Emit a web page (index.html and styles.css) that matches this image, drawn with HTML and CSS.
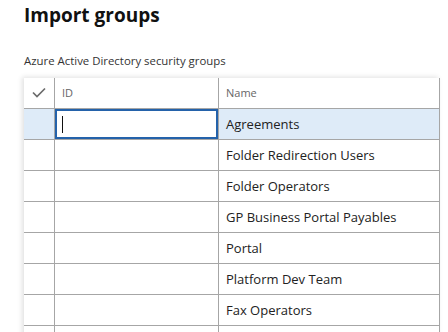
FILE: index.html
```html
<!DOCTYPE html>
<html lang="en">
<head>
    <meta charset="UTF-8">
    <meta name="viewport" content="width=device-width, initial-scale=1.0">
    <title>Import groups</title>
    <link rel="stylesheet" href="styles.css">
</head>
<body>
    <h1 class="page-title">Import groups</h1>
    <div class="section-label">Azure Active Directory security groups</div>

    <div class="grid">
        <div class="grid-row grid-head">
            <div class="cell cell-check">
                <svg width="30" height="30" viewBox="0 0 30 30">
                    <polyline points="9,14.5 13,18.5 21,10.5" fill="none" stroke="#6b6b6b" stroke-width="1.7"/>
                </svg>
            </div>
            <div class="cell cell-id">ID</div>
            <div class="cell cell-name">Name</div>
        </div>

        <div class="grid-row selected">
            <div class="cell cell-check"></div>
            <div class="cell cell-id">
                <div class="edit-box"><span class="caret"></span></div>
            </div>
            <div class="cell cell-name">Agreements</div>
        </div>
        <div class="grid-row">
            <div class="cell cell-check"></div>
            <div class="cell cell-id"></div>
            <div class="cell cell-name">Folder Redirection Users</div>
        </div>
        <div class="grid-row">
            <div class="cell cell-check"></div>
            <div class="cell cell-id"></div>
            <div class="cell cell-name">Folder Operators</div>
        </div>
        <div class="grid-row">
            <div class="cell cell-check"></div>
            <div class="cell cell-id"></div>
            <div class="cell cell-name">GP Business Portal Payables</div>
        </div>
        <div class="grid-row">
            <div class="cell cell-check"></div>
            <div class="cell cell-id"></div>
            <div class="cell cell-name">Portal</div>
        </div>
        <div class="grid-row">
            <div class="cell cell-check"></div>
            <div class="cell cell-id"></div>
            <div class="cell cell-name">Platform Dev Team</div>
        </div>
        <div class="grid-row">
            <div class="cell cell-check"></div>
            <div class="cell cell-id"></div>
            <div class="cell cell-name">Fax Operators</div>
        </div>
        <div class="grid-row">
            <div class="cell cell-check"></div>
            <div class="cell cell-id"></div>
            <div class="cell cell-name"></div>
        </div>
    </div>
</body>
</html>
```

FILE: styles.css
```css
html {
    overflow: hidden;
}
body {
    margin: 0;
    padding: 3px 0 0 24px;
    font-family: "Segoe UI", "Open Sans", sans-serif;
    color: #222;
    background: #fff;
}
.page-title {
    margin: 0;
    font-size: 19px;
    line-height: 24px;
    font-weight: 700;
    color: #111;
}
.section-label {
    margin-top: 26px;
    font-size: 11.4px;
    line-height: 15px;
    color: #333;
}
.grid {
    margin-top: 10px;
    width: 416px;
    box-shadow: -2px -1px 5px rgba(0, 0, 0, 0.12);
}
.grid-row {
    display: grid;
    grid-template-columns: 31px 164px 221px;
    height: 31px;
}
.cell {
    box-sizing: border-box;
    border-right: 1px solid #a6a6a6;
    border-bottom: 1px solid #a6a6a6;
    padding-left: 7px;
    font-size: 13px;
    line-height: 30px;
    white-space: nowrap;
    overflow: hidden;
}
.cell-check {
    padding: 0;
}
.cell-check svg {
    display: block;
}
.grid-head .cell {
    font-size: 11px;
    color: #666;
}
.selected .cell {
    background: #deebf8;
}
.selected .cell-id {
    background: #fff;
    padding: 0;
}
.edit-box {
    box-sizing: border-box;
    height: 30px;
    border: 2px solid #2462aa;
    padding: 5px 0 0 5px;
}
.caret {
    display: block;
    width: 1px;
    height: 17px;
    background: #111;
}
```
